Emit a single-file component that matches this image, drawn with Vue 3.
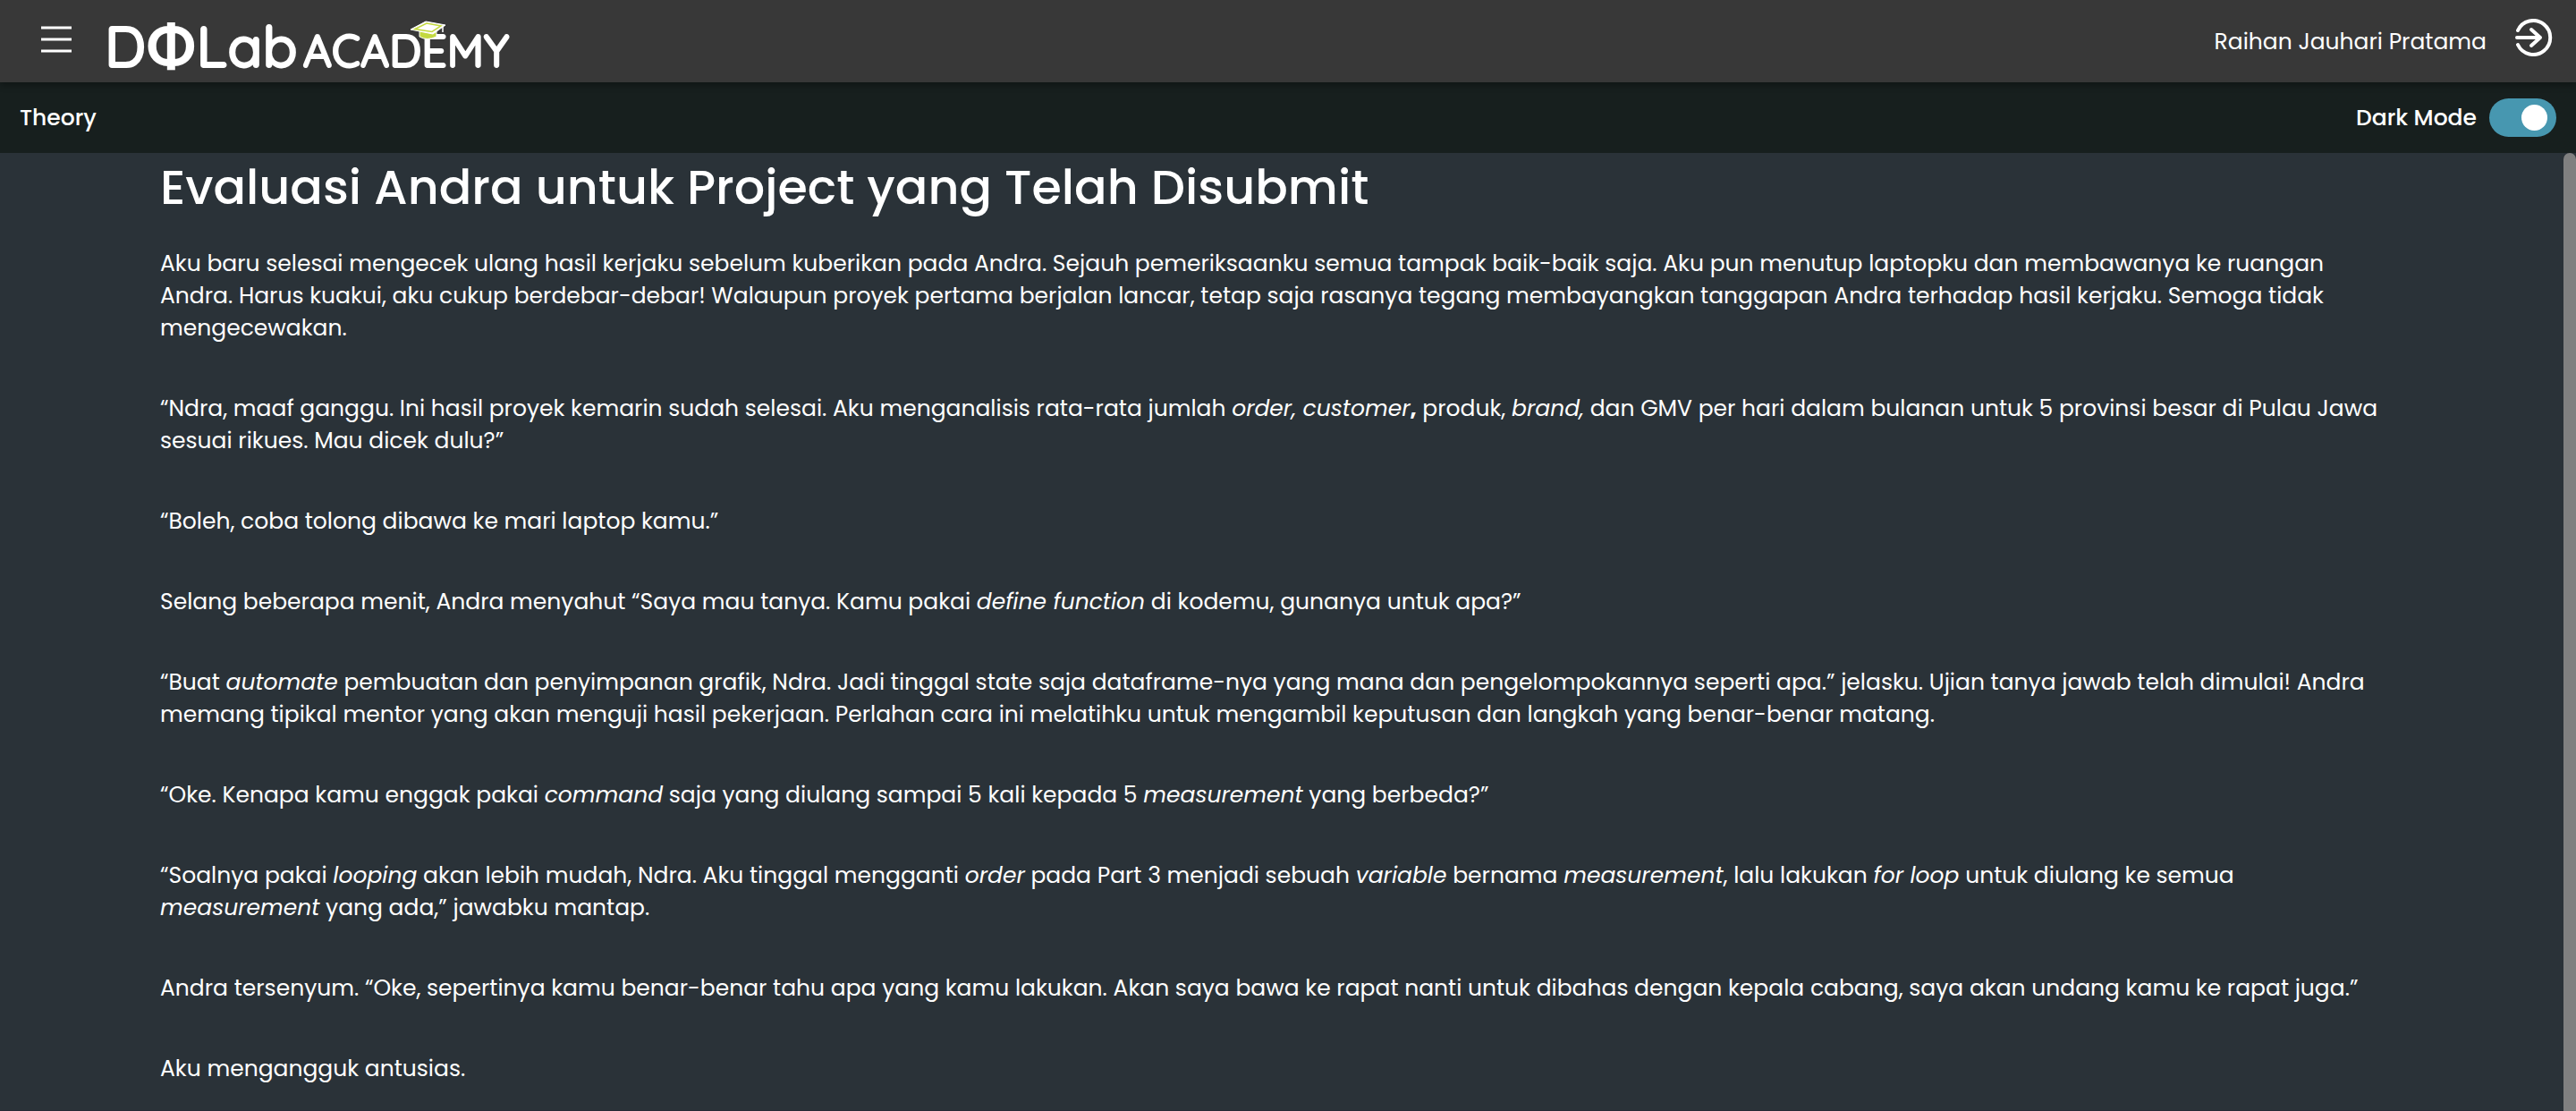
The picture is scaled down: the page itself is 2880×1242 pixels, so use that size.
<script setup>
import { ref } from 'vue'

const darkMode = ref(true)
</script>

<template>
  <div class="page">
    <header class="topbar">
      <button class="menu" type="button" aria-label="Menu">
        <svg width="36" height="32" viewBox="0 0 36 32" aria-hidden="true">
          <path d="M1 3H35M1 16H35M1 29H35" stroke="#fff" stroke-width="3" fill="none" />
        </svg>
      </button>
      <a class="logo" href="#" aria-label="DQLab Academy">
        <span class="brand">DΦLab</span>
        <span class="suffix">ACADEMY
          <svg class="cap" width="42" height="22" viewBox="0 0 42 22" aria-hidden="true">
            <path d="M11 11v7q8 5 19 0v-7z" fill="#c3d940" stroke="#fff" stroke-width="1" />
            <path d="M1 10L18 1L40 5L26 15Z" fill="#fff" stroke="#fff" stroke-width="1" />
            <path d="M6 9.500L19 3L35 6L25 12.500Z" fill="#fff" stroke="#c3d940" stroke-width="1.500" />
            <path d="M37 6v7M37 15v3" stroke="#fff" stroke-width="1.500" />
          </svg>
        </span>
      </a>
      <span class="user">Raihan Jauhari Pratama</span>
      <button class="logout" type="button" aria-label="Keluar">
        <svg width="42" height="42" viewBox="0 0 42 42" fill="none" stroke="#fff" stroke-width="4" stroke-linecap="round" stroke-linejoin="round" aria-hidden="true">
          <path d="M3 13A19 19 0 1 1 3 29" />
          <path d="M2 21H28M18 12L28 21L18 30" />
        </svg>
      </button>
    </header>

    <div class="subbar">
      <span>Theory</span>
      <label class="mode">
        <span>Dark Mode</span>
        <input v-model="darkMode" class="switch" type="checkbox" />
      </label>
    </div>

    <div class="body">
      <main class="article">
        <h1>Evaluasi Andra untuk Project yang Telah Disubmit</h1>
        <p>Aku baru selesai mengecek ulang hasil kerjaku sebelum kuberikan pada Andra. Sejauh pemeriksaanku semua tampak baik-baik saja. Aku pun menutup laptopku dan membawanya ke ruangan Andra. Harus kuakui, aku cukup berdebar-debar! Walaupun proyek pertama berjalan lancar, tetap saja rasanya tegang membayangkan tanggapan Andra terhadap hasil kerjaku. Semoga tidak mengecewakan.</p>
        <p>“Ndra, maaf ganggu. Ini hasil proyek kemarin sudah selesai. Aku menganalisis rata-rata jumlah <em>order, customer</em><strong>,</strong> produk, <em>brand,</em> dan GMV per hari dalam bulanan untuk 5 provinsi besar di Pulau Jawa sesuai rikues. Mau dicek dulu?”</p>
        <p>“Boleh, coba tolong dibawa ke mari laptop kamu.”</p>
        <p>Selang beberapa menit, Andra menyahut “Saya mau tanya. Kamu pakai <em>define function</em> di kodemu, gunanya untuk apa?”</p>
        <p>“Buat <em>automate</em> pembuatan dan penyimpanan grafik, Ndra. Jadi tinggal state saja dataframe-nya yang mana dan pengelompokannya seperti apa.” jelasku. Ujian tanya jawab telah dimulai! Andra memang tipikal mentor yang akan menguji hasil pekerjaan. Perlahan cara ini melatihku untuk mengambil keputusan dan langkah yang benar-benar matang.</p>
        <p>“Oke. Kenapa kamu enggak pakai <em>command</em> saja yang diulang sampai 5 kali kepada 5 <em>measurement</em> yang berbeda?”</p>
        <p>“Soalnya pakai <em>looping</em> akan lebih mudah, Ndra. Aku tinggal mengganti <em>order</em> pada Part 3 menjadi sebuah <em>variable</em> bernama <em>measurement</em>, lalu lakukan <em>for loop</em> untuk diulang ke semua <em>measurement</em> yang ada,” jawabku mantap.</p>
        <p>Andra tersenyum. “Oke, sepertinya kamu benar-benar tahu apa yang kamu lakukan. Akan saya bawa ke rapat nanti untuk dibahas dengan kepala cabang, saya akan undang kamu ke rapat juga.”</p>
        <p>Aku mengangguk antusias.</p>
      </main>
      <div class="scrollbar" aria-hidden="true"></div>
    </div>
  </div>
</template>

<style>
body {
  margin: 0;
  background: #2a3238;
}
</style>

<style scoped>
.page {
  display: flex;
  flex-direction: column;
  min-height: 100vh;
  color: #fff;
  background: #2a3238;
  font-family: Poppins, Inter, sans-serif;
  font-size: 25px;
  line-height: 36px;
}

button {
  display: flex;
  padding: 0;
  border: 0;
  background: none;
  cursor: pointer;
}

.topbar {
  position: relative;
  display: flex;
  align-items: center;
  box-sizing: border-box;
  height: 92px;
  padding: 0 24px 0 45px;
  background: #383838;
  box-shadow: 0 2px 8px rgba(0, 0, 0, 0.4);
}

.menu {
  margin-bottom: 4px;
}

.logo {
  display: flex;
  align-items: baseline;
  gap: 6px;
  margin-left: 36px;
  padding-top: 16px;
  color: #fff;
  font-family: Quicksand, "Varela Round", Nunito, Poppins, Inter, sans-serif;
  font-weight: 500;
  line-height: 72px;
  text-decoration: none;
  -webkit-text-stroke: 2px #fff;
}

.brand {
  font-size: 64px;
}

.suffix {
  position: relative;
  font-size: 50px;
}

.cap {
  position: absolute;
  top: 2px;
  left: 119px;
}

.user {
  margin-left: auto;
  padding-top: 2px;
}

.logout {
  margin: 0 2px 8px 32px;
}

.subbar {
  display: flex;
  align-items: center;
  justify-content: space-between;
  box-sizing: border-box;
  height: 79px;
  padding: 0 22px;
  background: #171f1e;
  font-weight: 500;
}

.mode {
  display: flex;
  align-items: center;
  gap: 14px;
}

.switch {
  display: flex;
  align-items: center;
  justify-content: flex-end;
  box-sizing: border-box;
  width: 75px;
  height: 43px;
  margin: 0;
  padding: 0 10px;
  border-radius: 22px;
  background: #4797b0;
  appearance: none;
}

.switch::before {
  width: 29px;
  height: 29px;
  border-radius: 50%;
  background: #fff;
  content: '';
}

.switch:not(:checked) {
  justify-content: flex-start;
  background: #888;
}

.body {
  display: flex;
  flex: 1;
}

.article {
  flex: 1;
  padding: 0 196px 0 179px;
  border-bottom: 1px solid #262a36;
}

h1 {
  margin: 0;
  padding: 4px 0 34px;
  font-size: 54px;
  font-weight: 500;
  line-height: 68px;
}

p {
  margin: 0 0 54px;
}

p:last-child {
  margin-bottom: 0;
}

.scrollbar {
  width: 14px;
  border-radius: 7px 7px 0 0;
  background: #808080;
}
</style>
